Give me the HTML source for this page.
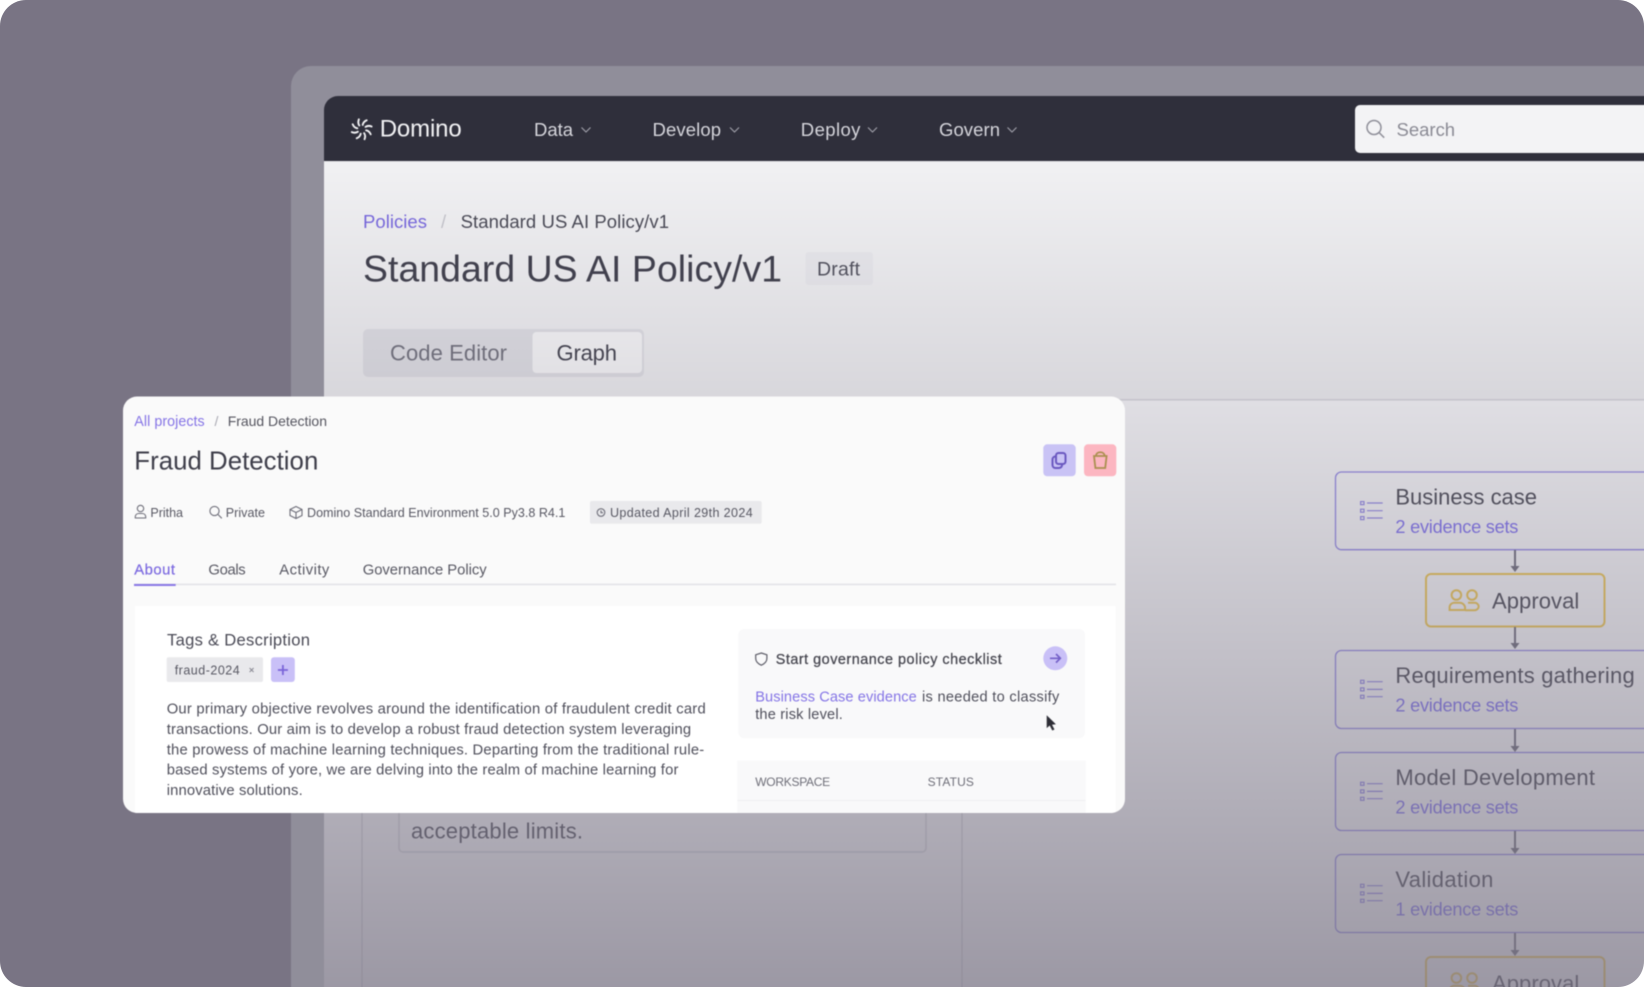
<!DOCTYPE html>
<html lang="en">
<head>
<meta charset="utf-8">
<title>Domino - Fraud Detection</title>
<style>
html,body{margin:0;padding:0;background:#fff;width:1644px;height:987px;overflow:hidden}
#wrap{width:1644px;height:987px;overflow:hidden;position:relative}
svg{display:block}
text{font-family:"Liberation Sans",Arial,sans-serif;white-space:pre}
</style>
</head>
<body>
<div id="wrap">
<svg xmlns="http://www.w3.org/2000/svg" width="1644" height="987" viewBox="0 0 1644 987">
<defs>
  <clipPath id="page"><rect x="0" y="0" width="1644" height="987" rx="26"/></clipPath>
  <clipPath id="cardclip"><rect x="123" y="396.5" width="1002" height="416.5" rx="14"/></clipPath>
  <linearGradient id="fade" x1="0" y1="161" x2="0" y2="987" gradientUnits="userSpaceOnUse">
    <stop offset="0" stop-color="#797484" stop-opacity="0"/>
    <stop offset="1" stop-color="#797484" stop-opacity=".73"/>
  </linearGradient>
  <g id="listicon" fill="none" stroke="#8f84e8" stroke-width="1.2">
    <rect x="1360.6" y="501.6" width="3.4" height="3"/>
    <rect x="1360.6" y="509.2" width="3.4" height="3"/>
    <rect x="1360.6" y="516.6" width="3.4" height="3"/>
    <path d="M1367 503H1382.7M1367 510.7H1382.7M1367 518H1382.7"/>
  </g>
  <g id="people" fill="none" stroke="#f2c84a" stroke-width="2">
    <circle cx="1456.4" cy="595" r="4.8"/>
    <circle cx="1472" cy="595" r="4.8"/>
    <path d="M1453.5 602.8h6a5.5 5.5 0 0 1 5.5 4v3.2h-15.4v-3.2a5 5 0 0 1 3.9-4z"/>
    <path d="M1468 602.8h6.5a4 4 0 0 1 4.2 3.5 4 4 0 0 1-4.2 3.9h-9.5"/>
  </g>
  <path id="arrowhead" d="M-4.5 0H4.5L0 6z" fill="#6a6878"/>
</defs>

<g clip-path="url(#page)">
<g style="filter:blur(.4px)">
  <rect x="-20" y="-20" width="1700" height="1030" fill="#797484"/>
  <!-- frame -->
  <path d="M291 1010V86a20 20 0 0 1 20-20H1670V1010Z" fill="#908e9a"/>
  <!-- content -->
  <rect x="324" y="120" width="1346" height="280" fill="#f1f1f3"/>
  <rect x="324" y="400" width="1346" height="610" fill="#fbfbfd"/>
  <rect x="324" y="399" width="1346" height="1.6" fill="#dadadf"/>

  <text x="363" y="228" font-size="18.5" fill="#7666de" textLength="64">Policies</text>
  <text x="441" y="228" font-size="18.5" fill="#c4c4cb">/</text>
  <text x="460.6" y="228" font-size="18.5" fill="#474753" textLength="208.4">Standard US AI Policy/v1</text>
  <text x="363" y="281.5" font-size="37.4" fill="#3b3b48" textLength="419">Standard US AI Policy/v1</text>
  <rect x="805.5" y="252" width="67.5" height="33" rx="3" fill="#eaeaee"/>
  <text x="817" y="275.5" font-size="19.5" fill="#4d4d59" textLength="43">Draft</text>

  <rect x="363" y="329" width="281" height="48" rx="5" fill="#e1e1e6"/>
  <rect x="532.5" y="332" width="109.5" height="41" rx="4" fill="#fafafb"/>
  <text x="390" y="360.5" font-size="22" fill="#6c6c78" textLength="117">Code Editor</text>
  <text x="556.5" y="360.5" font-size="22" fill="#3a3a46" textLength="60.5">Graph</text>

  <!-- lower panel -->
  <path d="M362 400V1010M962 400V1010" stroke="#d2d2d8" stroke-width="1.2" fill="none"/>
  <rect x="399" y="700" width="527" height="152" rx="4" fill="none" stroke="#dcdce1" stroke-width="1.7"/>
  <text x="411" y="838.5" font-size="22" fill="#444450" textLength="172">acceptable limits.</text>

  <!-- flow -->
  <g fill="none" stroke="#8f84e8" stroke-width="1.3">
    <path d="M1670 472H1341.5a6 6 0 0 0-6 6V543.7a6 6 0 0 0 6 6H1670"/>
    <path d="M1670 650.5H1341.5a6 6 0 0 0-6 6V722.5a6 6 0 0 0 6 6H1670"/>
    <path d="M1670 752.5H1341.5a6 6 0 0 0-6 6V824.5a6 6 0 0 0 6 6H1670"/>
    <path d="M1670 854.5H1341.5a6 6 0 0 0-6 6V926.5a6 6 0 0 0 6 6H1670"/>
  </g>
  <g fill="none" stroke="#f2c84a" stroke-width="2">
    <rect x="1426" y="574" width="178.5" height="52.5" rx="5"/>
    <path d="M1426 1010V962a5 5 0 0 1 5-5H1599.5a5 5 0 0 1 5 5V1010"/>
  </g>
  <path d="M1515 550V567M1515 627V644M1515 729V746M1515 831V848M1515 933V950" stroke="#6a6878" stroke-width="2" fill="none"/>
  <use href="#arrowhead" x="1515" y="566"/>
  <use href="#arrowhead" x="1515" y="643"/>
  <use href="#arrowhead" x="1515" y="746"/>
  <use href="#arrowhead" x="1515" y="848"/>
  <use href="#arrowhead" x="1515" y="950"/>

  <use href="#listicon"/>
  <use href="#listicon" y="178.7"/>
  <use href="#listicon" y="280.7"/>
  <use href="#listicon" y="382.7"/>
  <use href="#people"/>
  <use href="#people" y="383"/>

  <g fill="#3f3f4b" font-size="22">
    <text x="1395.4" y="504.3" textLength="141.6">Business case</text>
    <text x="1492" y="608.3" textLength="87.3">Approval</text>
    <text x="1395.4" y="682.8" textLength="239.3">Requirements gathering</text>
    <text x="1395.4" y="785" textLength="199.6">Model Development</text>
    <text x="1395.4" y="886.8" textLength="98">Validation</text>
    <text x="1492" y="991" textLength="87.3">Approval</text>
  </g>
  <g fill="#7a6bf3" font-size="18.2">
    <text x="1395.4" y="532.8" textLength="123">2 evidence sets</text>
    <text x="1395.4" y="711.3" textLength="123">2 evidence sets</text>
    <text x="1395.4" y="813.3" textLength="123">2 evidence sets</text>
    <text x="1395.4" y="915.3" textLength="123">1 evidence sets</text>
  </g>

  <!-- fade overlay -->
  <rect x="324" y="161" width="1346" height="850" fill="url(#fade)"/>

  <!-- nav -->
  <path d="M324 161V110a14 14 0 0 1 14-14H1670V161Z" fill="#2f2f3b"/>
  <rect x="324" y="161" width="1346" height="1.2" fill="#e6e6e9"/>
  <g transform="translate(361.7 129.3)" fill="none" stroke="#f2f2f4" stroke-width="1.9" stroke-linecap="round">
    <path id="blade" d="M1-4.4Q1.6-7.6 5-9"/>
    <use href="#blade" transform="rotate(45)"/>
    <use href="#blade" transform="rotate(90)"/>
    <use href="#blade" transform="rotate(135)"/>
    <use href="#blade" transform="rotate(180)"/>
    <use href="#blade" transform="rotate(225)"/>
    <use href="#blade" transform="rotate(270)"/>
    <use href="#blade" transform="rotate(315)"/>
  </g>
  <text x="379.7" y="136.7" font-size="24" fill="#f2f2f4" textLength="82">Domino</text>
  <g font-size="18.5" fill="#d6d6dc">
    <text x="534" y="136" textLength="39">Data</text>
    <text x="652.5" y="136" textLength="68.5">Develop</text>
    <text x="800.8" y="136" textLength="59.6">Deploy</text>
    <text x="939" y="136" textLength="61">Govern</text>
  </g>
  <g fill="none" stroke="#a2a2ac" stroke-width="1.1">
    <path d="M581.5 127.5l4.5 4.5 4.5-4.5"/>
    <path d="M730 127.5l4.5 4.5 4.5-4.5"/>
    <path d="M868 127.5l4.5 4.5 4.5-4.5"/>
    <path d="M1007.5 127.5l4.5 4.5 4.5-4.5"/>
  </g>
  <path d="M1670 105H1360a5 5 0 0 0-5 5V148a5 5 0 0 0 5 5H1670Z" fill="#f3f3f5"/>
  <g fill="none" stroke="#8f8f99" stroke-width="1.5">
    <circle cx="1374" cy="127.5" r="7"/>
    <path d="M1379 132.5l5.2 5.2"/>
  </g>
  <text x="1396.5" y="136" font-size="18.5" fill="#8a8a94" textLength="58.6">Search</text>

  <!-- card -->
  <g clip-path="url(#cardclip)">
    <rect x="123" y="396.5" width="1002" height="417" fill="#fafafa"/>
    <rect x="135" y="606" width="980.7" height="207" fill="#ffffff"/>

    <text x="134.3" y="426" font-size="14.3" fill="#8574e6" textLength="70.4">All projects</text>
    <text x="214.5" y="426" font-size="14" fill="#a9a9b2">/</text>
    <text x="227.7" y="426" font-size="14" fill="#55555f" textLength="99.3">Fraud Detection</text>
    <text x="134.3" y="469.3" font-size="25.8" fill="#3e3e4a" textLength="184">Fraud Detection</text>

    <rect x="1043.3" y="444.3" width="32.4" height="32" rx="4" fill="#c9c3f5"/>
    <g fill="none" stroke="#6a58c0" stroke-width="2">
      <rect x="1056" y="453" width="9.5" height="11" rx="2.5"/>
      <path d="M1056 456.5h-.5a3 3 0 0 0-3 3v5.5a3 3 0 0 0 3 3h3.5a3 3 0 0 0 3-3.5"/>
    </g>
    <rect x="1084" y="444.3" width="32.3" height="32" rx="4" fill="#fcb6c1"/>
    <path d="M1094 456h12.6l-1.4 12h-9.8zM1096 456c0-5 8.6-5 8.6 0" fill="none" stroke="#ab9050" stroke-width="1.8"/>

    <!-- meta -->
    <rect x="590" y="501" width="171.7" height="22.7" rx="2" fill="#e9e9ec"/>
    <g fill="none" stroke="#6f6f7a" stroke-width="1.1">
      <circle cx="140.5" cy="508.5" r="3.2"/>
      <path d="M135.3 518v-1.5a3.5 3.5 0 0 1 3.5-3h3.4a3.5 3.5 0 0 1 3.5 3v1.5z"/>
      <circle cx="214.5" cy="511" r="4.6"/>
      <path d="M218 514.5l3.8 3.8"/>
      <path d="M296 506.5l6 3v6l-6 3-6-3v-6zM290 509.5l6 3 6-3M296 512.5v6"/>
      <circle cx="601" cy="512.5" r="3.8"/>
      <path d="M601 510.5v2.2h2"/>
    </g>
    <g font-size="12.55" fill="#585863">
      <text x="150.4" y="517" textLength="32.6">Pritha</text>
      <text x="225.7" y="517" textLength="39.3">Private</text>
      <text x="307" y="517" textLength="258.4">Domino Standard Environment 5.0 Py3.8 R4.1</text>
      <text x="610" y="517" textLength="142.7">Updated April 29th 2024</text>
    </g>

    <!-- tabs -->
    <g font-size="14.8">
      <text x="134.3" y="574.4" fill="#7c6ae0" stroke="#7c6ae0" stroke-width=".25" textLength="40.7">About</text>
      <text x="208.4" y="574.4" fill="#585863" textLength="37.3">Goals</text>
      <text x="279.3" y="574.4" fill="#585863" textLength="50">Activity</text>
      <text x="362.7" y="574.4" fill="#585863" textLength="124">Governance Policy</text>
    </g>
    <rect x="134" y="583.5" width="982" height="1.8" fill="#e5e5e9"/>
    <rect x="134" y="584" width="41.7" height="2" fill="#8a78e6"/>

    <!-- left column -->
    <text x="167" y="645.5" font-size="16.6" fill="#4a4a56" textLength="143">Tags &amp; Description</text>
    <rect x="166.7" y="657.3" width="96.3" height="24.7" rx="2" fill="#e9e9ec"/>
    <text x="174.7" y="674.5" font-size="12.5" fill="#585863" textLength="65">fraud-2024</text>
    <path d="M249.6 668l4 4M253.6 668l-4 4" stroke="#8a8a94" stroke-width="1" fill="none"/>
    <rect x="271" y="657.3" width="23.8" height="24.7" rx="3" fill="#c9c0f7"/>
    <path d="M282.9 665v10M277.9 670h10" stroke="#7a64d8" stroke-width="1.8" fill="none"/>

    <g font-size="14.8" fill="#4f4f5b">
      <text x="166.7" y="713.7" textLength="539">Our primary objective revolves around the identification of fraudulent credit card</text>
      <text x="166.7" y="734" textLength="524.4">transactions. Our aim is to develop a robust fraud detection system leveraging</text>
      <text x="166.7" y="754.3" textLength="537.5">the prowess of machine learning techniques. Departing from the traditional rule-</text>
      <text x="166.7" y="774.7" textLength="511.7">based systems of yore, we are delving into the realm of machine learning for</text>
      <text x="166.7" y="794.8" textLength="136">innovative solutions.</text>
    </g>

    <!-- right column -->
    <rect x="738.3" y="629" width="346.7" height="109.3" rx="6" fill="#f9f9fa"/>
    <path d="M761.3 653l5.6 1.8v3.6c0 3.4-2.4 5.4-5.6 6.8-3.2-1.4-5.6-3.4-5.6-6.8v-3.6z" fill="none" stroke="#5d5d68" stroke-width="1.2"/>
    <text x="775.7" y="664" font-size="14.4" fill="#46464f" stroke="#46464f" stroke-width=".25" textLength="226">Start governance policy checklist</text>
    <circle cx="1055.3" cy="658.3" r="12" fill="#c9c0f7"/>
    <path d="M1050 658.3h10M1056 654l4.3 4.3-4.3 4.3" fill="none" stroke="#7460c8" stroke-width="1.7"/>
    <text x="755.2" y="701.5" font-size="14.6" fill="#8474e6" textLength="161.6">Business Case evidence</text>
    <text x="922" y="701.5" font-size="14.6" fill="#4f4f5b" textLength="137.3">is needed to classify</text>
    <text x="755.2" y="719" font-size="14.6" fill="#4f4f5b" textLength="87.6">the risk level.</text>
    <path d="M1046.7 715.3v12.8l3-2.6 2.6 5 2.2-1-2.5-4.8 3.9-.4z" fill="#2e2e36"/>

    <rect x="737.3" y="760.7" width="348.4" height="60" fill="#f9f9fa"/>
    <text x="755.2" y="786" font-size="12" fill="#6e6e78" textLength="75">WORKSPACE</text>
    <text x="927.6" y="786" font-size="12" fill="#6e6e78" textLength="46.3">STATUS</text>
    <rect x="737.3" y="800" width="348.4" height="1" fill="#efeff2"/>
  </g>
</g>
</g>
</svg>
</div>
</body>
</html>
